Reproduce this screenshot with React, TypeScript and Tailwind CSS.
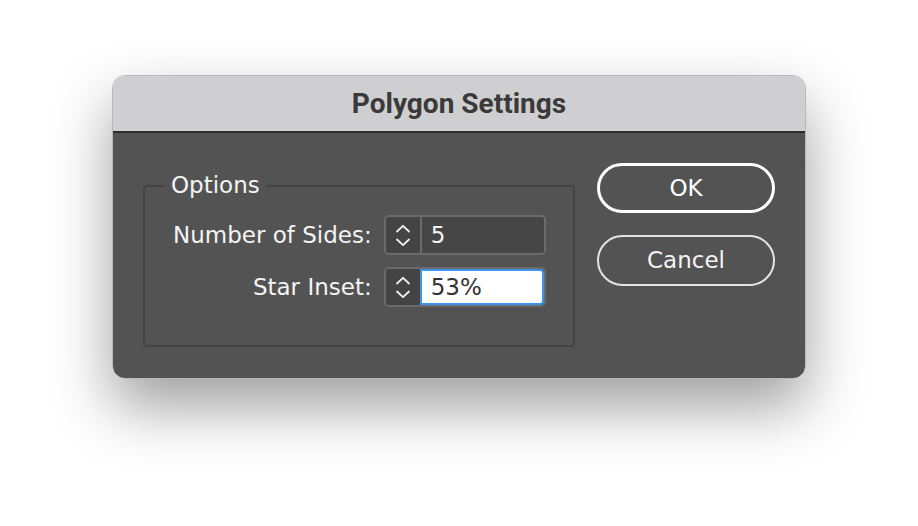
import React from "react";

function Stepper() {
  return (
    <div className="flex h-full w-[34px] flex-col items-center justify-center gap-[5px] bg-[#444444]">
      <svg width="16" height="9" viewBox="0 0 16 9" fill="none">
        <path d="M2 7.5 L8 1.8 L14 7.5" stroke="#f2f2f2" strokeWidth="1.8" strokeLinecap="round" strokeLinejoin="round" />
      </svg>
      <svg width="16" height="9" viewBox="0 0 16 9" fill="none">
        <path d="M2 1.5 L8 7.2 L14 1.5" stroke="#f2f2f2" strokeWidth="1.8" strokeLinecap="round" strokeLinejoin="round" />
      </svg>
    </div>
  );
}

export default function App() {
  const ui = { fontFamily: '"DejaVu Sans", "Liberation Sans", sans-serif' };
  return (
    <div className="min-h-[526px] w-[918px] bg-white pl-[112px] pt-[75px]">
      <div className="w-[694px] overflow-hidden rounded-[13px] border border-[#b9b9b9] shadow-[0_28px_60px_rgba(0,0,0,0.38)]">
        <div className="flex h-[57px] items-center justify-center border-b-[2px] border-[#2c2c2c] bg-[#cfcfd1]">
          <span className="text-[28px] font-bold text-[#3a3a3a]" style={{ fontFamily: 'Roboto, "Liberation Sans", sans-serif' }}>
            Polygon Settings
          </span>
        </div>
        <div className="flex h-[245px] bg-[#535353] px-[30px] pt-[30px]" style={ui}>
          <div className="relative mt-[22px] h-[162px] w-[432px] rounded-[4px] border-[2px] border-[#444444]">
            <span className="absolute left-[20px] top-[-16px] bg-[#535353] px-[6px] text-[23px] leading-[28px] text-[#f4f4f4]">
              Options
            </span>
            <div className="grid grid-cols-[auto_auto] items-center justify-start gap-x-[12px] gap-y-[12px] pl-[28px] pt-[28px] text-[23px] text-[#f4f4f4]">
              <span className="justify-self-end">Number of Sides:</span>
              <div className="flex h-[40px] w-[162px] overflow-hidden rounded-[5px] border-[2px] border-[#6a6a6a]">
                <Stepper />
                <div className="flex flex-1 items-center border-l-[2px] border-[#6a6a6a] bg-[#464646] pl-[9px] text-[#f4f4f4]">5</div>
              </div>
              <span className="justify-self-end">Star Inset:</span>
              <div className="flex h-[40px] w-[162px] overflow-hidden rounded-[5px] border-[2px] border-[#6a6a6a]">
                <Stepper />
                <div className="flex flex-1 items-center rounded-r-[4px] border-[2px] border-[#3d95ef] bg-white pl-[9px] text-[#333333]">53%</div>
              </div>
            </div>
          </div>
          <div className="ml-auto flex w-[178px] flex-col gap-[22px]">
            <div className="flex h-[50px] items-center justify-center rounded-full border-[3px] border-white text-[23px] text-white">OK</div>
            <div className="flex h-[51px] items-center justify-center rounded-full border-[2px] border-[#e4e4e4] text-[23px] text-[#f4f4f4]">Cancel</div>
          </div>
        </div>
      </div>
    </div>
  );
}
